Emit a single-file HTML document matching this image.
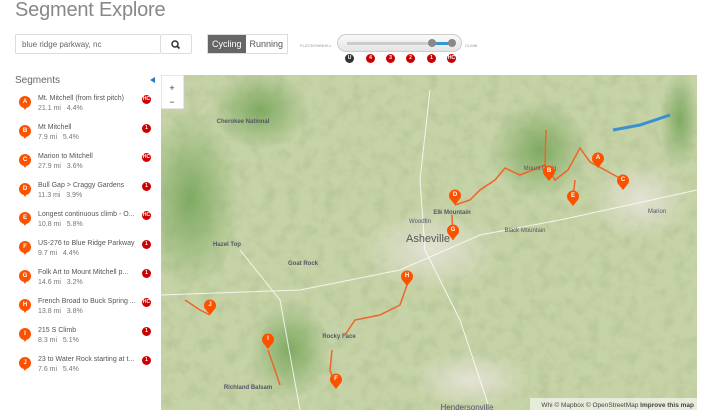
<!DOCTYPE html>
<html><head><meta charset="utf-8"><style>
*{margin:0;padding:0;box-sizing:border-box}
body{width:719px;height:420px;background:#fff;font-family:"Liberation Sans",sans-serif;position:relative;overflow:hidden;color:#555}
.t{position:absolute;left:15px;top:-1px;font-size:20px;color:#888;font-weight:300;letter-spacing:-0.2px}
.search{position:absolute;left:15px;top:34px;width:146px;height:20px;border:1px solid #ddd;border-radius:2px;font-size:8px;color:#666;padding:5px 0 0 6px}
.sbtn{position:absolute;left:161px;top:34px;width:31px;height:20px;border:1px solid #ddd;border-left:none;border-radius:0 2px 2px 0}
.tog{position:absolute;left:207px;top:34px;height:20px;border:1px solid #ddd;font-size:9px;display:flex}
.tog span{display:block;padding:4px 4px 0}
.tog .on{background:#666;color:#fff}
.sl{position:absolute;left:337px;top:34px;width:125px;height:18px;border:1px solid #ccc;border-radius:9px;background:linear-gradient(#fafafa,#e4e4e4)}
.lab{position:absolute;font-size:4px;color:#999;top:43px}
.b{position:absolute;width:9px;height:9px;border-radius:50%;background:#c00;color:#fff;font-size:5px;font-weight:bold;text-align:center;line-height:9px}
.seg{position:absolute;left:15px;top:75px;font-size:10px;color:#666}
.it{position:absolute;left:18px;width:142px;height:28px}
.pin{position:absolute;left:1px;top:0;width:12px;height:12px;border-radius:50%;background:#fc5200;color:#fff;font-size:6px;font-weight:bold;text-align:center;line-height:12px}
.pin:after{content:"";position:absolute;left:3px;top:9px;border:3px solid transparent;border-top:5px solid #fc5200}
.nm{position:absolute;left:20px;top:-1px;font-size:7px;color:#555;white-space:nowrap}
.st{position:absolute;left:20px;top:9px;font-size:7px;color:#777}
.it .b{left:124px;top:-1px}
.map{position:absolute;left:161px;top:75px;width:536px;height:335px;overflow:hidden;background:#c9d5ac}
</style></head><body>
<div class="t">Segment Explore</div>
<div class="search">blue ridge parkway, nc</div>
<div class="sbtn"><svg width="31" height="20"><circle cx="14" cy="9" r="3" fill="none" stroke="#333" stroke-width="1.5"/><line x1="16" y1="11" x2="18.5" y2="13.5" stroke="#333" stroke-width="1.8"/></svg></div>
<div class="tog"><span class="on">Cycling</span><span>Running</span></div>
<div class="lab" style="left:300px">FLAT/DOWNHILL</div>
<div class="lab" style="left:465px">CLIMB</div>
<div class="sl"><div style="position:absolute;left:9px;top:7px;width:106px;height:3px;background:#ccc"></div><div style="position:absolute;left:93px;top:7px;width:22px;height:3px;background:#39c"></div><div style="position:absolute;left:90px;top:4px;width:8px;height:8px;border-radius:50%;background:#888"></div><div style="position:absolute;left:110px;top:4px;width:8px;height:8px;border-radius:50%;background:#888"></div></div>
<div class="b" style="left:345px;top:54px;background:#333">U</div>
<div class="b" style="left:366px;top:54px">4</div>
<div class="b" style="left:386px;top:54px">3</div>
<div class="b" style="left:406px;top:54px">2</div>
<div class="b" style="left:427px;top:54px">1</div>
<div class="b" style="left:447px;top:54px">HC</div>
<div class="seg">Segments</div>
<div style="position:absolute;left:150px;top:77px;border:3px solid transparent;border-right:5px solid #2a7ac0;border-left:none"></div>

<div class="it" style="top:96px"><div class="pin">A</div><div class="nm">Mt. Mitchell (from first pitch)</div><div class="st">21.1 mi &nbsp; 4.4%</div><div class="b">HC</div></div>
<div class="it" style="top:125px"><div class="pin">B</div><div class="nm">Mt Mitchell</div><div class="st">7.9 mi &nbsp; 5.4%</div><div class="b">1</div></div>
<div class="it" style="top:154px"><div class="pin">C</div><div class="nm">Marion to Mitchell</div><div class="st">27.9 mi &nbsp; 3.6%</div><div class="b">HC</div></div>
<div class="it" style="top:183px"><div class="pin">D</div><div class="nm">Bull Gap &gt; Craggy Gardens</div><div class="st">11.3 mi &nbsp; 3.9%</div><div class="b">1</div></div>
<div class="it" style="top:212px"><div class="pin">E</div><div class="nm">Longest continuous climb - O...</div><div class="st">10.8 mi &nbsp; 5.8%</div><div class="b">HC</div></div>
<div class="it" style="top:241px"><div class="pin">F</div><div class="nm">US-276 to Blue Ridge Parkway</div><div class="st">9.7 mi &nbsp; 4.4%</div><div class="b">1</div></div>
<div class="it" style="top:270px"><div class="pin">G</div><div class="nm">Folk Art to Mount Mitchell p...</div><div class="st">14.6 mi &nbsp; 3.2%</div><div class="b">1</div></div>
<div class="it" style="top:299px"><div class="pin">H</div><div class="nm">French Broad to Buck Spring ...</div><div class="st">13.8 mi &nbsp; 3.8%</div><div class="b">HC</div></div>
<div class="it" style="top:328px"><div class="pin">I</div><div class="nm">215 S Climb</div><div class="st">8.3 mi &nbsp; 5.1%</div><div class="b">1</div></div>
<div class="it" style="top:357px"><div class="pin">J</div><div class="nm">23 to Water Rock starting at t...</div><div class="st">7.6 mi &nbsp; 5.4%</div><div class="b">1</div></div>

<div class="map"><svg width="536" height="335" viewBox="161 75 536 335">
<defs><radialGradient id="g1"><stop offset="0" stop-color="#7faa62"/><stop offset="1" stop-color="#7faa62" stop-opacity="0"/></radialGradient>
<radialGradient id="g2"><stop offset="0" stop-color="#e4e2d4"/><stop offset="1" stop-color="#e4e2d4" stop-opacity="0"/></radialGradient>
<filter id="n" x="0" y="0" width="100%" height="100%"><feTurbulence type="fractalNoise" baseFrequency="0.08" numOctaves="3" seed="4"/><feColorMatrix values="0 0 0 0 0.35  0 0 0 0 0.45  0 0 0 0 0.25  0 0 0 1.1 -0.45"/></filter></defs>
<rect x="161" y="75" width="536" height="335" fill="#c6d3a6"/>
<rect x="161" y="75" width="536" height="335" filter="url(#n)" opacity=".7"/>
<ellipse cx="190" cy="200" rx="50" ry="90" fill="url(#g1)"/>
<ellipse cx="260" cy="110" rx="50" ry="40" fill="url(#g1)"/>
<ellipse cx="540" cy="150" rx="50" ry="50" fill="url(#g1)"/>
<ellipse cx="290" cy="350" rx="40" ry="50" fill="url(#g1)"/>
<ellipse cx="680" cy="120" rx="20" ry="50" fill="url(#g1)"/>
<ellipse cx="430" cy="250" rx="70" ry="40" fill="url(#g2)"/>
<ellipse cx="470" cy="380" rx="60" ry="30" fill="url(#g2)"/>
<ellipse cx="640" cy="200" rx="50" ry="40" fill="url(#g2)"/>
<g stroke="#fff" stroke-width="1" fill="none" opacity=".8">
<path d="M161 295 L300 290 L400 270 L480 235 L560 220 L697 190"/>
<path d="M430 90 L420 180 L425 250 L460 320 L490 410"/>
<path d="M240 250 L280 300 L300 410"/>
</g>
<path d="M613 130 L640 125 L670 115" stroke="#3a8fd0" stroke-width="3" fill="none"/>
<g stroke="#f06428" stroke-width="1.5" fill="none">
<path d="M546 130 L545 165 L555 180 L568 170 L580 148 L590 162 L605 170 L623 180"/>
<path d="M573 198 L575 180"/>
<path d="M455 205 L470 200 L480 190 L495 180 L505 168 L520 175 L545 165"/>
<path d="M453 240 L452 215"/>
<path d="M407 285 L400 305 L380 315 L355 320 L345 335"/>
<path d="M268 350 L275 370 L280 385"/>
<path d="M336 388 L330 370 L332 350"/>
<path d="M185 300 L200 310 L210 315"/>
</g>
<g font-family="Liberation Sans" font-size="6" fill="#556" text-anchor="middle">
<text x="428" y="242" font-size="11" fill="#555">Asheville</text>
<text x="420" y="223">Woodfin</text>
<text x="452" y="214" font-weight="bold">Elk Mountain</text>
<text x="525" y="232">Black Mountain</text>
<text x="657" y="213">Marion</text>
<text x="467" y="410" font-size="8">Hendersonville</text>
<text x="243" y="123" font-weight="bold">Cherokee National</text>
<text x="227" y="246" font-weight="bold">Hazel Top</text>
<text x="303" y="265" font-weight="bold">Goat Rock</text>
<text x="339" y="338" font-weight="bold">Rocky Face</text>
<text x="248" y="389" font-weight="bold">Richland Balsam</text>
<text x="540" y="170">Mount Craig</text>
</g>
<rect x="161" y="75" width="23" height="34" fill="#fff" stroke="#ccc"/>
<text x="172" y="91" font-size="9" text-anchor="middle" fill="#333">+</text>
<text x="172" y="105" font-size="9" text-anchor="middle" fill="#333">−</text>
<rect x="530" y="398" width="167" height="12" fill="#fff" opacity=".6"/>
<text x="694" y="407" font-size="6.5" text-anchor="end" fill="#444" font-family="Liberation Sans">Whi © Mapbox © OpenStreetMap <tspan font-weight="bold">Improve this map</tspan></text>
<g font-family="Liberation Sans" font-size="6" font-weight="bold" fill="#fff" text-anchor="middle">
<g transform="translate(598,160)"><path d="M0 8 L-4 3 A6 6 0 1 1 4 3 Z" fill="#fc5200"/><text y="-1">A</text></g>
<g transform="translate(549,173)"><path d="M0 8 L-4 3 A6 6 0 1 1 4 3 Z" fill="#fc5200"/><text y="-1">B</text></g>
<g transform="translate(623,182)"><path d="M0 8 L-4 3 A6 6 0 1 1 4 3 Z" fill="#fc5200"/><text y="-1">C</text></g>
<g transform="translate(455,197)"><path d="M0 8 L-4 3 A6 6 0 1 1 4 3 Z" fill="#fc5200"/><text y="-1">D</text></g>
<g transform="translate(573,198)"><path d="M0 8 L-4 3 A6 6 0 1 1 4 3 Z" fill="#fc5200"/><text y="-1">E</text></g>
<g transform="translate(453,232)"><path d="M0 8 L-4 3 A6 6 0 1 1 4 3 Z" fill="#fc5200"/><text y="-1">G</text></g>
<g transform="translate(407,278)"><path d="M0 8 L-4 3 A6 6 0 1 1 4 3 Z" fill="#fc5200"/><text y="-1">H</text></g>
<g transform="translate(210,307)"><path d="M0 8 L-4 3 A6 6 0 1 1 4 3 Z" fill="#fc5200"/><text y="-1">J</text></g>
<g transform="translate(268,341)"><path d="M0 8 L-4 3 A6 6 0 1 1 4 3 Z" fill="#fc5200"/><text y="-1">I</text></g>
<g transform="translate(336,381)"><path d="M0 8 L-4 3 A6 6 0 1 1 4 3 Z" fill="#fc5200"/><text y="-1">F</text></g>
</g>
</svg></div>
</body></html>
